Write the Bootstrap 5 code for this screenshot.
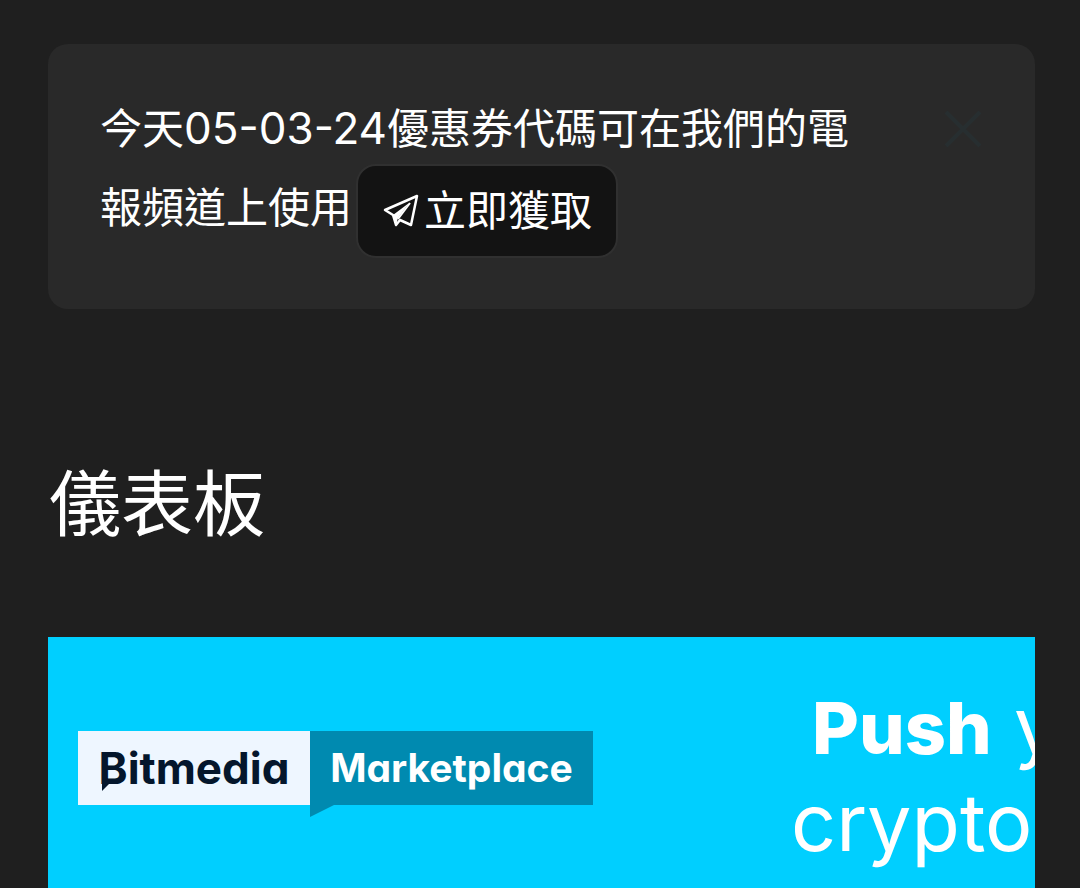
<!DOCTYPE html>
<html lang="zh-Hant">
<head>
<meta charset="utf-8">
<meta name="viewport" content="width=device-width, initial-scale=1">
<title>儀表板</title>
<link href="https://cdn.jsdelivr.net/npm/bootstrap@5.3.0/dist/css/bootstrap.min.css" rel="stylesheet">
<style>
  body { background: #1f1f1f; color: #fff; font-family: Inter, "Noto Sans CJK TC", sans-serif; }
  .page { padding: 44px 45px 0 48px; }
  .notice { background: #292929; color: #fff; border: 0; border-radius: 20px; padding: 45px 52px 62px; font-size: 42px; line-height: 79px; }
  .notice-text { max-width: 780px; }
  .notice-date { font-size: 44px; line-height: 1; }
  .notice-btn { background: #131313; color: #fff; border: 2px solid #303030; border-radius: 20px; padding: 20px 24px; margin: -13px 0 -11px 4px; font-size: 42px; line-height: 50px; vertical-align: middle; }
  .notice-btn:hover { background: #0b0b0b; color: #fff; }
  .close-btn { color: #272e30; line-height: 0; margin-top: 20px; }
  .page-title { font-size: 72px; line-height: 96px; margin: 147px 0 85px 1px; font-weight: 400; }
  .promo { background: #00cfff; color: #fff; padding: 41px 0 0 30px; text-decoration: none; white-space: nowrap; font-feature-settings: "cv11"; }
  .promo:hover { color: #fff; }
  .promo-logo { margin-top: 53px; font-size: 39px; line-height: 74px; font-weight: 700; }
  .logo-left { background: #eef6ff; color: #04162c; width: 232px; font-size: 44px; }
  .logo-right { background: #008ab0; width: 283px; }
  .logo-tail { position: absolute; left: 0; top: 100%; }
  .letter-tail { position: absolute; left: 24px; top: 52px; }
  .promo-copy { margin-left: 198px; font-size: 79px; line-height: 94px; }
  .promo-lead { padding-left: 21px; }
  .promo-lead strong { font-weight: 800; font-size: 72px; }
</style>
</head>
<body>
<main class="page d-flex flex-column min-vh-100">
  <div class="notice alert d-flex justify-content-between align-items-start mb-0" role="alert">
    <div class="notice-text">今天<span class="notice-date">05-03-24</span>優惠券代碼可在我們的電報頻道上使用<button type="button" class="notice-btn btn d-inline-flex align-items-center"><svg width="38" height="36" viewBox="0 0 38 36" fill="none" stroke="currentColor" stroke-width="2.5" stroke-linejoin="round" aria-hidden="true"><path d="M3 17 35 3 29 32 18 27 14 32 11 22Z"/><path d="M28 10 16 26"  stroke-width="2"/><path d="M11 22 27 10 16 25 14 32Z" fill="currentColor" stroke="none"/></svg><span class="ms-1">立即獲取</span></button></div>
    <button type="button" class="close-btn btn p-0 border-0" aria-label="關閉" data-bs-dismiss="alert"><svg width="40" height="40" viewBox="0 0 40 40" stroke="currentColor" stroke-width="4" aria-hidden="true"><path d="M3 3 37 37M37 3 3 37"/></svg></button>
  </div>
  <h1 class="page-title">儀表板</h1>
  <a href="#" class="promo d-flex align-items-start flex-grow-1 overflow-hidden">
    <span class="promo-logo d-flex flex-shrink-0">
      <span class="logo-left position-relative text-center">Bitmedia<svg class="letter-tail" width="8" height="8" aria-hidden="true"><path d="M0 0V8L8 0Z" fill="#04162c"/></svg></span>
      <span class="logo-right position-relative text-center">Marketplace<svg class="logo-tail" width="24" height="12" aria-hidden="true"><path d="M0 0V12L24 0Z" fill="#008ab0"/></svg></span>
    </span>
    <span class="promo-copy flex-shrink-0">
      <span class="promo-lead d-block"><strong>Push</strong> y</span>
      <span class="d-block">crypto</span>
    </span>
  </a>
</main>
<script src="https://cdn.jsdelivr.net/npm/bootstrap@5.3.0/dist/js/bootstrap.bundle.min.js"></script>
</body>
</html>
